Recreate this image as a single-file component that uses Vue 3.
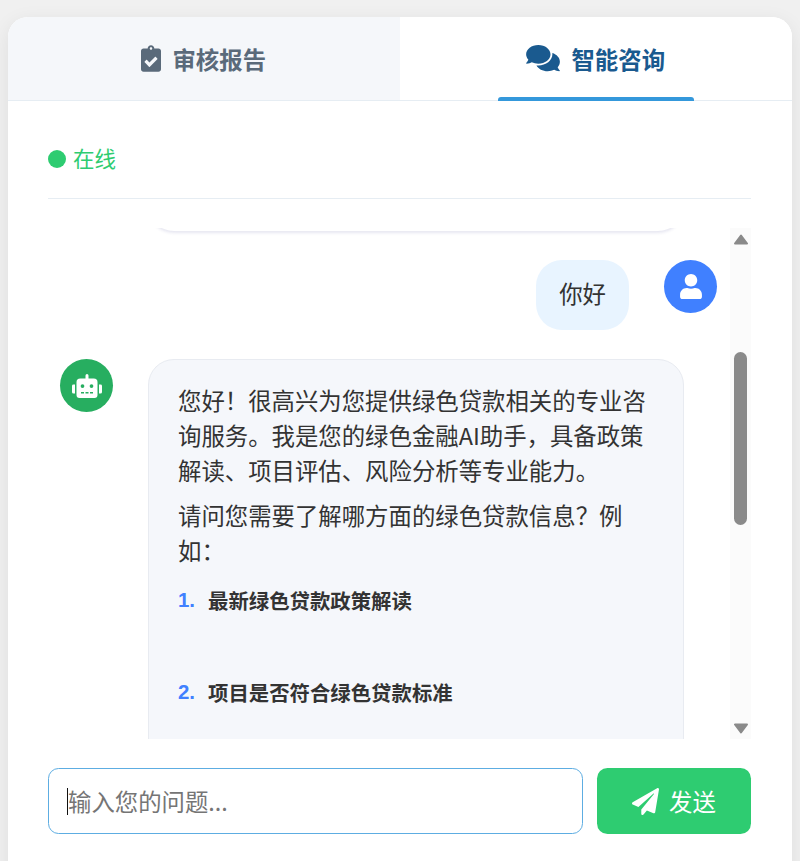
<script setup>
import { onMounted, ref } from 'vue'

const feed = ref(null)
const tabs = [
  { label: '审核报告', icon: 'report', active: false },
  { label: '智能咨询', icon: 'chat', active: true }
]

onMounted(() => {
  feed.value.scrollTop = 394
})
</script>

<template>
  <main class="card">
    <nav class="tabs">
      <button v-for="tab in tabs" :key="tab.label" class="tab" :class="{ active: tab.active }">
        <svg v-if="tab.icon === 'report'" class="tab-icon report" viewBox="0 0 384 512"><path fill="currentColor" d="M336 64h-80c0-35.3-28.7-64-64-64s-64 28.7-64 64H48C21.5 64 0 85.5 0 112v352c0 26.5 21.5 48 48 48h288c26.5 0 48-21.5 48-48V112c0-26.5-21.5-48-48-48zM192 40c13.3 0 24 10.7 24 24s-10.7 24-24 24-24-10.7-24-24 10.7-24 24-24zm121.2 231.8l-143 141.8c-4.7 4.7-12.3 4.6-17-.1l-82.6-83.3c-4.7-4.7-4.6-12.3.1-17L99.1 285c4.7-4.7 12.3-4.6 17 .1l46 46.4 106-105.2c4.7-4.7 12.3-4.6 17 .1l28.2 28.4c4.7 4.8 4.6 12.3-.1 17z"/></svg>
        <svg v-else class="tab-icon chat" viewBox="0 0 576 512"><path fill="currentColor" d="M416 192c0-88.4-93.1-160-208-160S0 103.6 0 192c0 34.3 14.1 65.9 38 92-13.4 30.2-35.5 54.2-35.8 54.5-2.2 2.3-2.8 5.7-1.5 8.7S4.8 352 8 352c36.6 0 66.9-12.3 88.7-25 32.2 15.7 70.3 25 111.3 25 114.9 0 208-71.6 208-160zm122 220c23.9-26 38-57.7 38-92 0-66.9-53.5-124.2-129.3-148.1.9 6.6 1.3 13.3 1.3 20.1 0 105.9-107.7 192-240 192-10.8 0-21.3-.8-31.7-1.9C207.8 439.6 281.8 480 368 480c41 0 79.1-9.2 111.3-25 21.8 12.7 52.1 25 88.7 25 3.2 0 6.1-1.9 7.3-4.8 1.3-2.9.7-6.3-1.5-8.7-.3-.3-22.4-24.2-35.8-54.5z"/></svg>
        <span>{{ tab.label }}</span>
      </button>
    </nav>

    <section class="panel">
      <header class="status">
        <i class="dot"></i>
        <span>在线</span>
      </header>

      <div class="chat-window">
        <div ref="feed" class="feed">
          <div class="msg bot prior-row">
            <div class="avatar green hidden-avatar"></div>
            <div class="bubble prior"></div>
          </div>

          <div class="msg user">
            <div class="bubble mine">你好</div>
            <div class="avatar blue">
              <svg class="user-icon" viewBox="0 0 448 512"><path fill="currentColor" d="M224 256c70.7 0 128-57.3 128-128S294.7 0 224 0 96 57.3 96 128s57.3 128 128 128zm89.6 32h-16.7c-22.2 10.2-46.9 16-72.9 16s-50.6-5.8-72.9-16h-16.7C60.2 288 0 348.2 0 422.4V464c0 26.5 21.5 48 48 48h352c26.5 0 48-21.5 48-48v-41.6c0-74.2-60.2-134.4-134.4-134.4z"/></svg>
            </div>
          </div>

          <div class="msg bot">
            <div class="avatar green">
              <svg class="robot-icon" viewBox="0 0 640 512"><path fill="currentColor" d="M32,224H64V416H32A31.96166,31.96166,0,0,1,0,384V256A31.96166,31.96166,0,0,1,32,224Zm512-48V448a64.06328,64.06328,0,0,1-64,64H160a64.06328,64.06328,0,0,1-64-64V176a79.974,79.974,0,0,1,80-80H288V32a32,32,0,0,1,64,0V96H464A79.974,79.974,0,0,1,544,176ZM264,256a40,40,0,1,0-40,40A39.997,39.997,0,0,0,264,256Zm-8,128H192v32h64Zm96,0H288v32h64ZM456,256a40,40,0,1,0-40,40A39.997,39.997,0,0,0,456,256Zm-8,128H384v32h64ZM640,256V384a31.96166,31.96166,0,0,1-32,32H576V224h32A31.96166,31.96166,0,0,1,640,256Z"/></svg>
            </div>
            <div class="bubble answer">
              <p>您好！很高兴为您提供绿色贷款相关的专业咨询服务。我是您的绿色金融AI助手，具备政策解读、项目评估、风险分析等专业能力。</p>
              <p>请问您需要了解哪方面的绿色贷款信息？例如：</p>
              <ol>
                <li><strong>最新绿色贷款政策解读</strong></li>
                <li><strong>项目是否符合绿色贷款标准</strong></li>
              </ol>
            </div>
          </div>
        </div>

        <aside class="scrollbar" aria-hidden="true">
          <svg class="arrow up" viewBox="0 0 14 11"><path fill="#8a8a8a" stroke="#8a8a8a" stroke-width="2" stroke-linejoin="round" d="M7 1.5L13 9.5H1z"/></svg>
          <i class="thumb"></i>
          <svg class="arrow down" viewBox="0 0 14 11"><path fill="#8a8a8a" stroke="#8a8a8a" stroke-width="2" stroke-linejoin="round" d="M7 9.5L1 1.5H13z"/></svg>
        </aside>
      </div>

      <form class="composer" @submit.prevent>
        <div class="input">
          <i class="caret"></i>
          <span>输入您的问题...</span>
        </div>
        <button class="send">
          <svg class="plane" viewBox="0 0 512 512"><path fill="currentColor" d="M476 3.2L12.5 270.6c-18.1 10.4-15.8 35.6 2.2 43.2L121 358.4l287.3-253.2c5.5-4.9 13.3 2.6 8.6 8.3L176 407v80.5c0 23.6 28.5 32.9 42.5 15.8L282 426l124.6 52.2c14.2 6 30.4-2.9 33-18.2l72-432C515 7.8 493.3-6.8 476 3.2z"/></svg>
          <span>发送</span>
        </button>
      </form>
    </section>
  </main>
</template>

<style>
html, body {
  margin: 0;
  height: 100%;
  overflow: hidden;
  background: #f0f0f0;
}
</style>

<style scoped>
* { box-sizing: border-box; }

.card {
  width: 784px;
  height: 890px;
  margin: 17px 8px 0;
  background: #fff;
  border-radius: 20px;
  overflow: hidden;
  box-shadow: 0 5px 20px rgba(0, 0, 0, 0.08);
  font-family: "Microsoft YaHei", "Noto Sans CJK SC", sans-serif;
  color: #333;
}

.tabs {
  display: grid;
  grid-template-columns: 391.5px 1fr;
  height: 84px;
  border-bottom: 1px solid #e6edf3;
}

.tab {
  position: relative;
  display: flex;
  align-items: center;
  justify-content: center;
  gap: 11px;
  border: 0;
  padding: 0;
  background: #f5f7fa;
  color: #5a6a7a;
  font: inherit;
  font-size: 23.4px;
  font-weight: 700;
}

.tab.active {
  background: #fff;
  color: #1a5a8f;
  gap: 11px;
}

.tab.active::after {
  content: "";
  position: absolute;
  left: 98px;
  right: 98px;
  bottom: -1px;
  height: 4px;
  background: #3498db;
  border-radius: 3px 3px 0 0;
}

.tab-icon.report { width: 20px; height: 27px; }
.tab-icon.chat { width: 34px; height: 30px; margin-bottom: 2px; }

.panel {
  padding: 0 41px 0 40px;
}

.status {
  display: flex;
  align-items: center;
  gap: 7px;
  height: 98px;
  padding-top: 19px;
  border-bottom: 1px solid #e6edf3;
  color: #2ecc71;
  font-size: 21.5px;
}

.status span { margin-bottom: 3px; }

.dot {
  width: 18px;
  height: 18px;
  border-radius: 50%;
  background: #2ecc71;
}

.chat-window {
  display: flex;
  height: 511px;
  margin-top: 29px;
}

.feed {
  flex: 1;
  min-width: 0;
  overflow: hidden;
  padding: 0 13px 0 12px;
}

.msg {
  display: flex;
  margin-bottom: 29px;
}

.msg.bot { gap: 35px; }
.msg.user { justify-content: flex-end; gap: 35px; }

.avatar {
  flex: none;
  display: flex;
  align-items: center;
  justify-content: center;
  width: 53px;
  height: 53px;
  border-radius: 50%;
  color: #fff;
}

.avatar.green { background: #27ae60; }
.avatar.blue { background: #4080ff; }
.hidden-avatar { visibility: hidden; }

.user-icon { width: 22px; height: 25px; }
.robot-icon { width: 30px; height: 24px; }

.bubble {
  border-radius: 26px;
  font-size: 23.4px;
  line-height: 35px;
}

.bubble.prior {
  width: 536px;
  height: 397px;
  box-shadow: 0 2px 3px rgba(58, 58, 140, 0.12);
}

.bubble.mine {
  padding: 16px 23px 19px;
  background: #e8f4ff;
  color: #333;
}

.bubble.answer {
  width: 536px;
  padding: 23px 29px 24px;
  background: #f5f7fb;
  border: 1px solid #e8ebf1;
}

.answer p {
  margin: 0 0 10px;
}

.answer ol {
  margin: 0;
  padding: 5px 0 0;
  list-style: none;
  counter-reset: item;
  font-size: 20.4px;
}

.answer li {
  counter-increment: item;
  position: relative;
  padding-left: 30px;
  height: 92px;
  line-height: 35px;
  color: #333;
}

.answer li::before {
  content: counter(item) ".";
  position: absolute;
  left: 0;
  font-family: "Liberation Sans", sans-serif;
  font-weight: 700;
  color: #4080ff;
}

.answer strong { font-weight: 700; }

.scrollbar {
  flex: none;
  position: relative;
  width: 21px;
  background: #fbfbfb;
}

.arrow {
  position: absolute;
  left: 3.5px;
  width: 14px;
  height: 11px;
}

.arrow.up { top: 6px; }
.arrow.down { bottom: 5px; }

.thumb {
  position: absolute;
  top: 124px;
  left: 3.5px;
  width: 13.5px;
  height: 173px;
  border-radius: 7px;
  background: #8a8a8a;
}

.composer {
  display: flex;
  gap: 14px;
  margin-top: 29px;
}

.input {
  position: relative;
  flex: 1;
  display: flex;
  align-items: center;
  height: 66px;
  padding-left: 19px;
  border: 1.5px solid #5dade2;
  border-radius: 10.5px;
  color: #757575;
  font-size: 23.4px;
}

.caret {
  position: absolute;
  left: 18px;
  top: 19px;
  width: 1px;
  height: 27px;
  background: #111;
}

.send {
  display: flex;
  align-items: center;
  justify-content: center;
  gap: 10px;
  flex: none;
  width: 154px;
  height: 66px;
  border: 0;
  border-radius: 10.5px;
  background: #2ecc71;
  color: #fff;
  font: inherit;
  font-size: 23.4px;
}

.plane { width: 27px; height: 27px; }
</style>
